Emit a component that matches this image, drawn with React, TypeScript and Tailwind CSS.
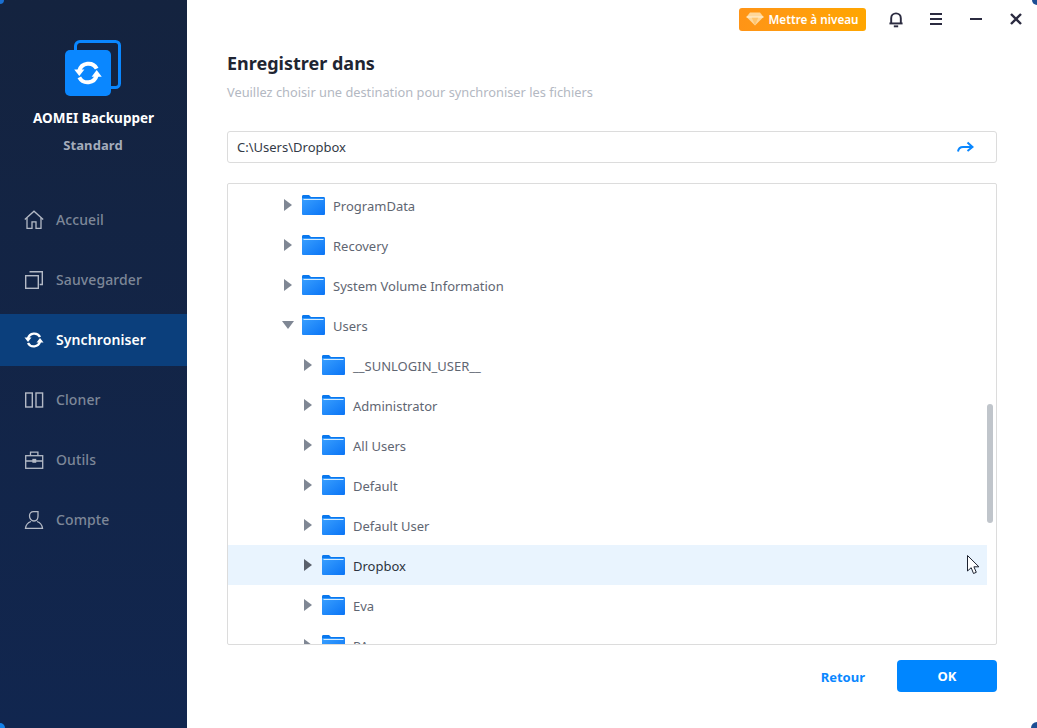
import React from 'react';

const FONT = "font-['Noto_Sans','Open_Sans',sans-serif]";

const FolderIcon = () => (
  <svg width="23" height="20" viewBox="0 0 23 20" className="shrink-0">
    <defs>
      <linearGradient id="folderFill" x1="0" y1="0" x2="1" y2="1">
        <stop offset="0" stopColor="#3aa0ff" />
        <stop offset="1" stopColor="#0a74f5" />
      </linearGradient>
    </defs>
    <path d="M0 1.500C0 .7.6 0 1.400 0H7l2 2h12.600c.8 0 1.400.6 1.400 1.400V8H0z" fill="#0a78ee" />
    <rect x="0" y="3" width="23" height="17" rx="1" fill="url(#folderFill)" />
    <rect x="1.500" y="4" width="20" height="1" fill="#d6ecff" />
  </svg>
);

const SyncGlyph = ({ size, weight }: { size: number; weight: number }) => (
  <svg width={size} height={size} viewBox="0 0 20 20" fill="none">
    <path d="M4 8.500A6.500 6.500 0 0 1 16 7" stroke="currentColor" strokeWidth={weight} />
    <path d="M.5 7.500h7L4 12z" fill="currentColor" />
    <path d="M16 11.500A6.500 6.500 0 0 1 4 13" stroke="currentColor" strokeWidth={weight} />
    <path d="M19.500 12.500h-7L16 8z" fill="currentColor" />
  </svg>
);

const navItems = [
  {
    label: 'Accueil',
    icon: (
      <svg width="20" height="20" viewBox="0 0 20 20" fill="none" stroke="currentColor" strokeWidth="1.300">
        <path d="M.8 9.500L10 1.200l9.200 8.300" />
        <path d="M3 8v10.300h5v-6.500h4v6.500h5V8" />
      </svg>
    )
  },
  {
    label: 'Sauvegarder',
    icon: (
      <svg width="20" height="20" viewBox="0 0 20 20" fill="none" stroke="currentColor" strokeWidth="1.400">
        <rect x="1.700" y="5.700" width="12.600" height="12.600" />
        <path d="M5.500 1.700h12.800v12.800h-2.600" />
      </svg>
    )
  },
  {
    label: 'Synchroniser',
    icon: <SyncGlyph size={20} weight={2.4} />
  },
  {
    label: 'Cloner',
    icon: (
      <svg width="20" height="20" viewBox="0 0 20 20" fill="none" stroke="currentColor" strokeWidth="1.400">
        <rect x="1.700" y="3" width="6.600" height="14" />
        <rect x="12" y="3" width="6.600" height="14" />
      </svg>
    )
  },
  {
    label: 'Outils',
    icon: (
      <svg width="20" height="20" viewBox="0 0 20 20" fill="none" stroke="currentColor" strokeWidth="1.300">
        <rect x="1.700" y="5.700" width="17" height="12.600" />
        <path d="M6.500 5.500V2.200h7.400v3.300M1.700 11h17" />
        <rect x="9" y="9.500" width="2.600" height="2.600" fill="currentColor" />
      </svg>
    )
  },
  {
    label: 'Compte',
    icon: (
      <svg width="20" height="20" viewBox="0 0 20 20" fill="none" stroke="currentColor" strokeWidth="1.300">
        <path d="M14 1.700H9.500C7 1.700 5.500 3.600 5.500 6s1.700 5 4.500 5 4-2.500 4-5z" />
        <path d="M7 11.500c-3 1-5 3-5.500 6.800h17c-.5-3.800-2.500-5.800-5.500-6.800" />
      </svg>
    )
  }
];

const treeRows = [
  { label: 'ProgramData', depth: 0 },
  { label: 'Recovery', depth: 0 },
  { label: 'System Volume Information', depth: 0 },
  { label: 'Users', depth: 0, open: true },
  { label: '__SUNLOGIN_USER__', depth: 1 },
  { label: 'Administrator', depth: 1 },
  { label: 'All Users', depth: 1 },
  { label: 'Default', depth: 1 },
  { label: 'Default User', depth: 1 },
  { label: 'Dropbox', depth: 1, active: true },
  { label: 'Eva', depth: 1 },
  { label: 'PA', depth: 1 }
];

export default function App() {
  return (
    <div className={`relative flex w-[1037px] h-[728px] overflow-hidden bg-white ${FONT}`}>
      {/* Sidebar */}
      <aside className="w-[187px] shrink-0 flex flex-col bg-gradient-to-b from-[#14233f] to-[#11264f]">
        <div className="flex flex-col items-center pt-[40px] h-[190px]">
          <svg width="56" height="56" viewBox="0 0 56 56" className="mr-[1px]">
            <path d="M10.500 11V6a4.500 4.500 0 0 1 4.500-4.500h35.500a4 4 0 0 1 4 4V43.500a4 4 0 0 1-4 4H46" fill="none" stroke="#0a87ff" strokeWidth="3" />
            <rect x="0" y="10" width="46" height="46" rx="5" fill="#0a87ff" />
            <g transform="translate(8.500 18.500) scale(1.450)">
              <path d="M4 8.500A6.500 6.500 0 0 1 16 7" stroke="#fff" strokeWidth="2.800" fill="none" />
              <path d="M.5 7.500h7L4 12z" fill="#fff" />
              <path d="M16 11.500A6.500 6.500 0 0 1 4 13" stroke="#fff" strokeWidth="2.800" fill="none" />
              <path d="M19.500 12.500h-7L16 8z" fill="#fff" />
            </g>
          </svg>
          <div className="mt-[12px] text-[13.500px] leading-[20px] font-bold text-white">AOMEI Backupper</div>
          <div className="mt-[7px] pr-[1px] text-[13px] leading-[20px] font-bold tracking-[0.1px] text-[#a4acbb]">Standard</div>
        </div>
        <nav className="flex flex-col">
          {navItems.map(item => {
            const active = item.label === 'Synchroniser';
            return (
              <div key={item.label} className="h-[60px] flex items-center">
                <div
                  className={`w-full h-[52px] flex items-center gap-[12px] pl-[24px] text-[14px] tracking-[0.1px] ${
                    active
                      ? 'bg-[#0b3f7c] text-white font-semibold'
                      : 'text-[#7d8798] font-medium'
                  }`}
                >
                  <span className={`w-[20px] h-[20px] flex items-center justify-center ${active ? 'text-white' : 'text-[#b4bac6]'}`}>
                    {item.icon}
                  </span>
                  <span className="pb-[1px]">{item.label}</span>
                </div>
              </div>
            );
          })}
        </nav>
      </aside>

      {/* Main */}
      <main className="relative flex-1 flex flex-col min-w-0 px-[40px]">
        <header className="h-[40px] -mr-[40px] flex items-center justify-end pb-[2px]">
          <div className="w-[127px] h-[23px] flex items-center justify-center gap-[4px] rounded-[3px] bg-gradient-to-r from-[#ff9416] to-[#ffa600] text-[11.700px] font-semibold text-white">
            <svg width="18" height="14" viewBox="0 0 18 14">
              <path d="M4 .5h10l3.500 4.500L9 13.500.5 5z" fill="#ffd79a" />
              <path d="M5.500 5L9 13.500 12.500 5z" fill="#ffc56e" />
              <path d="M.5 5h17" stroke="#fff1d6" strokeWidth="1" />
            </svg>
            <span className="pt-[1px]">Mettre à niveau</span>
          </div>
          <div className="w-[171px] flex items-center text-[#2b2b40]">
            <span className="w-[60px] flex justify-center">
              <svg width="14" height="17" viewBox="0 0 16 18" fill="none" stroke="currentColor" strokeWidth="2.200">
                <path d="M2.500 13V7.500a5.500 5.500 0 0 1 11 0V13" />
                <path d="M.5 13.500h15" />
                <path d="M5.500 16.800h5" />
              </svg>
            </span>
            <span className="w-[20px] flex justify-center">
              <svg width="14" height="14" viewBox="0 0 14 14" stroke="currentColor" strokeWidth="2">
                <path d="M1 2h12M1 7h12M1 12h12" />
              </svg>
            </span>
            <span className="w-[60px] flex justify-center">
              <svg width="14" height="14" viewBox="0 0 14 14" stroke="currentColor" strokeWidth="2">
                <path d="M1 7h12" />
              </svg>
            </span>
            <span className="w-[20px] flex justify-center">
              <svg width="14" height="14" viewBox="0 0 14 14" stroke="currentColor" strokeWidth="2.400">
                <path d="M2 2l10 10M12 2L2 12" />
              </svg>
            </span>
          </div>
        </header>

        <h1 className="mt-[10px] text-[18px] leading-[26px] font-bold text-[#1f2532]">Enregistrer dans</h1>
        <p className="mt-[6px] text-[12.800px] leading-[20px] text-[#b3b8c2]">Veuillez choisir une destination pour synchroniser les fichiers</p>

        <div className="mt-[29px] h-[32px] shrink-0 flex items-center justify-between rounded-[3px] border border-[#dcdcdc] pl-[9px] pr-[22px] text-[13px] text-[#333a47]">
          <span className="pt-[1px]">C:\Users\Dropbox</span>
          <svg width="17" height="12" viewBox="0 0 17 12" fill="none" stroke="#0a87ff" strokeWidth="2">
            <path d="M1 10.500c.5-3 2-4.500 5-4.500h9" />
            <path d="M10.500 1.500L15.500 6l-5 4" />
          </svg>
        </div>

        <div className="relative mt-[20px] h-[462px] shrink-0 rounded-[2px] border border-[#dcdcdc] overflow-hidden pt-[1px]">
          {treeRows.map(row => (
            <div
              key={row.label}
              className={`h-[40px] w-[759px] flex items-center text-[13px] ${
                row.active ? 'bg-[#e9f4fe] text-[#2c3340]' : 'text-[#5f6672]'
              } ${row.depth === 1 ? 'pl-[76px]' : 'pl-[56px]'}`}
            >
              {row.open ? (
                <span className="w-[19px] shrink-0 -ml-[2px] mr-[1px]">
                  <span className="block w-0 h-0 border-x-[6px] border-x-transparent border-t-[8px] border-t-[#7f8794]" />
                </span>
              ) : (
                <span className="w-[18px] shrink-0">
                  <span className={`block w-0 h-0 border-y-[6px] border-y-transparent border-l-[8px] ${row.active ? 'border-l-[#5a606b]' : 'border-l-[#7f8794]'}`} />
                </span>
              )}
              <FolderIcon />
              <span className="ml-[8px] pt-[3px]">{row.label}</span>
            </div>
          ))}
          {/* scrollbar */}
          <div className="absolute left-[759px] top-[220px] w-[6px] h-[119px] rounded-[3px] bg-[#c0c5cb]" />
          {/* mouse cursor */}
          <svg width="13" height="20" viewBox="0 0 13 20" className="absolute left-[739px] top-[371px]">
            <path d="M.5.5v15.500l3.700-3.300 2.300 5.800 2.800-1.200-2.400-5.500h5z" fill="#fff" stroke="#1c2230" strokeWidth="1" />
          </svg>
        </div>

        <div className="flex-1 flex items-start justify-end pt-[15px]">
          <span className="h-[32px] flex items-center pt-[3px] text-[13px] font-bold text-[#0a87ff] mr-[32px]">Retour</span>
          <div className="w-[100px] h-[32px] flex items-center justify-center pt-[1px] rounded-[4px] bg-[#0086ff] text-[13px] font-bold text-white">OK</div>
        </div>
      </main>

      {/* window corners */}
      <div className="absolute left-0 top-0 w-[4px] h-[4px] rounded-br-[4px] bg-[#1a6fd0]" />
      <div className="absolute right-0 top-0 w-[5px] h-[5px] rounded-bl-[5px] bg-[#1c4e94]" />
      <div className="absolute left-0 bottom-0 w-[5px] h-[5px] rounded-tr-[5px] bg-[#1280e8]" />
      <div className="absolute right-0 bottom-0 w-[6px] h-[6px] rounded-tl-[6px] bg-[#1c4e94]" />
    </div>
  );
}
